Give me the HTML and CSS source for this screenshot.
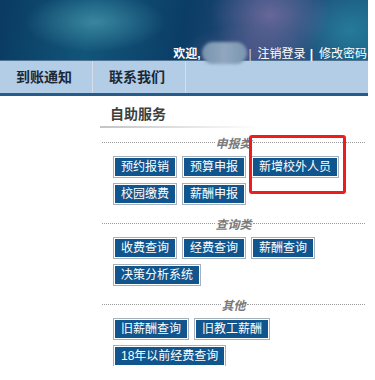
FILE: index.html
```html
<!DOCTYPE html>
<html>
<head lang="zh">
    <meta charset="UTF-8">
    <title>自助服务</title>
<link rel="stylesheet" href="styles.css">
</head>
<body>
  <div class="page">
    <div class="banner">
      <div class="welcome"><b>欢迎,</b><span class="name"></span><span class="pipe light">|</span>注销登录<b class="pipe">|</b>修改密码</div>
    </div>
    <ul class="nav">
      <li>到账通知</li>
      <li>联系我们</li>
    </ul>
    <div class="main">
      <div class="side"></div>
      <div class="content">
        <h2 class="title">自助服务</h2>
        <div class="group">
          <div class="group-head"><span>申报类</span></div>
          <div class="btns">
            <a class="btn">预约报销</a>
            <a class="btn">预算申报</a>
            <a class="btn">新增校外人员</a>
            <a class="btn">校园缴费</a>
            <a class="btn">薪酬申报</a>
          </div>
        </div>
        <div class="group">
          <div class="group-head"><span>查询类</span></div>
          <div class="btns">
            <a class="btn">收费查询</a>
            <a class="btn">经费查询</a>
            <a class="btn">薪酬查询</a>
            <a class="btn">决策分析系统</a>
          </div>
        </div>
        <div class="group">
          <div class="group-head"><span>其他</span></div>
          <div class="btns">
            <a class="btn">旧薪酬查询</a>
            <a class="btn">旧教工薪酬</a>
            <a class="btn">18年以前经费查询</a>
          </div>
        </div>
      </div>
    </div>
    <div class="mark"></div>
  </div>
</body>
</html>
```

FILE: styles.css
```css
body, html {
    border: 0;
    padding: 0;
    margin: 0;
    background: white;
    font-family: "Liberation Sans", "Noto Sans CJK SC", sans-serif;
}

.page {
    position: relative;
    width: 368px;
}

.banner {
    height: 60px;
    border-bottom: 1px solid #4f7391;
    background:
        radial-gradient(ellipse 70px 30px at 95px 22px, rgba(70, 150, 170, 0.75), transparent),
        radial-gradient(ellipse 60px 45px at 270px 15px, rgba(120, 110, 160, 0.8), transparent),
        radial-gradient(ellipse 70px 30px at 250px 55px, rgba(90, 90, 140, 0.7), transparent),
        radial-gradient(ellipse 50px 40px at 350px 30px, rgba(40, 130, 160, 0.8), transparent),
        linear-gradient(100deg, #0a3a60 0%, #12557a 25%, #0b3d66 50%, #244a78 70%, #1a5f85 100%);
    color: white;
}

.welcome {
    padding-top: 42px;
    padding-right: 1px;
    line-height: 18px;
    font-size: 12px;
    text-align: right;
    white-space: nowrap;
}

.welcome b {
    font-weight: bold;
}

.name {
    display: inline-block;
    width: 45px;
    height: 22px;
    margin: 0 0 0 2px;
    vertical-align: -6px;
    border-radius: 11px;
    background: linear-gradient(90deg, #7893ae, #8fa7bf 50%, #7a95b0);
    filter: blur(1.5px);
}

.pipe {
    margin: 0 6px 0 4px;
}

.pipe.light {
    margin-left: 1px;
    color: #c8d4e0;
}

.nav {
    list-style: none;
    margin: 0;
    padding: 0;
    display: flex;
    height: 32px;
    background: #b4cde6;
    border-bottom: 3px solid #265c8c;
}

.nav li {
    padding: 0 20px 0 16px;
    line-height: 32px;
    font-size: 14px;
    font-weight: bold;
    color: #1b2836;
    border-right: 1px solid #d4dfea;
}

.main {
    display: flex;
}

.side {
    width: 100px;
}

.content {
    flex: 1;
    padding-top: 7px;
}

.title {
    margin: 0;
    padding-left: 10px;
    font-size: 14px;
    line-height: 22px;
    font-weight: bold;
    color: #3e3e3e;
}

.title::after {
    content: "";
    display: block;
    width: 160px;
    height: 2px;
    margin: 1px 0 0 -10px;
    background: linear-gradient(90deg, #c4c4c4, #ffffff);
}

.group {
    margin: 6px 3px 0 2px;
}

.group + .group {
    margin-top: 11px;
}

.group-head {
    display: flex;
    align-items: center;
    height: 16px;
}

.group-head::before, .group-head::after {
    content: "";
    flex: 1;
    border-top: 1px dotted #9a9a9a;
}

.group-head span {
    padding: 0 1px;
    font-size: 12px;
    font-style: italic;
    font-weight: bold;
    color: #7a7a7a;
}

.btns {
    display: flex;
    flex-wrap: wrap;
    gap: 7px;
    padding: 7px 0 0 12px;
}

.btn {
    display: block;
    padding: 0 6px;
    line-height: 18px;
    font-size: 12px;
    color: white;
    background-color: #10558d;
    border: 1px solid white;
    box-shadow: 0 0 0 1px #a6b0ba;
    cursor: pointer;
}

.mark {
    position: absolute;
    left: 249px;
    top: 135px;
    width: 97px;
    height: 59px;
    box-sizing: border-box;
    border: 3px solid #ee1d1d;
    border-radius: 3px;
}
```
